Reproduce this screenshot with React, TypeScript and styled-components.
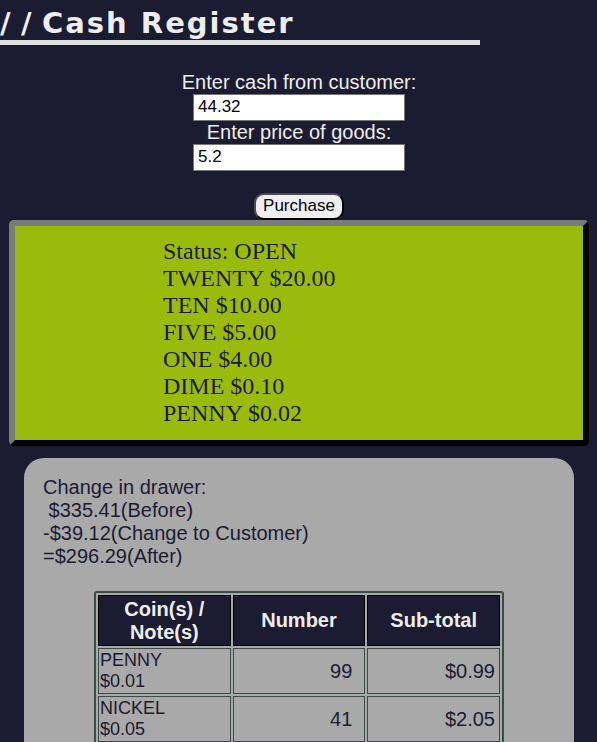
import React, { useState } from "react";
import styled, { createGlobalStyle } from "styled-components";

const Global = createGlobalStyle`
  *, *::before, *::after { box-sizing: border-box; }
  html, body { margin: 0; padding: 0; }
  html { min-height: 100%; scrollbar-width: none; }
  body { background: #1b1b32; font-family: "Liberation Sans", Arial, sans-serif; }
`;

const Page = styled.main`
  display: flex;
  flex-direction: column;
  color: #eeeeee;
`;

const Title = styled.h1`
  margin: 0;
  width: 100%;
  max-width: 480px;
  padding-top: 6px;
  border-bottom: 5px solid #dfdfe2;
  font: bold 29px/34px "DejaVu Sans", Verdana, sans-serif;
  letter-spacing: 2px;
  white-space: nowrap;
`;

const Slash = styled.span`
  display: inline-block;
  width: 21px;
`;

const Form = styled.form`
  display: flex;
  flex-direction: column;
  align-items: center;
  padding: 26px 0 0 1px;
`;

const Label = styled.label`
  font-size: 20px;
  line-height: 23px;
`;

const Field = styled.input`
  width: 212px;
  height: 27px;
  padding: 0 4px 2px;
  border: 1px solid #767676;
  border-radius: 0;
  background: #fff;
  color: #000;
  font: 17px "Liberation Sans", Arial, sans-serif;
`;

const Purchase = styled.button`
  margin-top: 22px;
  padding: 0 7px 2px;
  height: 27px;
  border: 2px solid;
  border-color: #4c4c4c #000 #000 #4c4c4c;
  border-radius: 10px;
  background: #efefef;
  color: #000;
  font: 17px "Liberation Sans", Arial, sans-serif;
`;

const Status = styled.section`
  margin: 0 8px 0 9px;
  padding: 12px 0 13px 148px;
  border: 6px solid;
  border-color: #787c7c #000 #000 #787c7c;
  border-radius: 5px;
  background: #9bbb0c;
  color: #1b1b32;
  font: 24px/27px "Liberation Serif", "Times New Roman", serif;
`;

const Drawer = styled.section`
  margin: 12px 23px 0 24px;
  padding: 18px 19px 0;
  border-radius: 20px 20px 0 0;
  background: #a9a9a9;
  color: #1b1b32;
  font-size: 20px;
  line-height: 23px;
`;

const Line = styled.div`
  white-space: pre;
`;

const Table = styled.table`
  width: 410px;
  max-width: 100%;
  margin: 23px auto 0;
  border: 2px solid #3c4b48;
  border-radius: 3px;
  border-spacing: 2px;
  table-layout: fixed;
`;

const Head = styled.th`
  padding: 1px;
  height: 51px;
  border: 1px solid #000;
  background: #1b1b32;
  color: #eeeeee;
`;

const Coin = styled.td`
  padding: 0 1px;
  height: 46px;
  border: 1px solid #3c4b48;
  font-size: 18px;
  line-height: 21px;
`;

const Amount = styled.td<{ $inset: number }>`
  padding: 0 ${(p) => p.$inset}px 0 1px;
  border: 1px solid #3c4b48;
  text-align: right;
`;

const change = ["Status: OPEN", "TWENTY $20.00", "TEN $10.00", "FIVE $5.00", "ONE $4.00", "DIME $0.10", "PENNY $0.02"];
const totals = ["Change in drawer:", " $335.41(Before)", "-$39.12(Change to Customer)", "=$296.29(After)"];
const coins = [
  { name: "PENNY", value: "$0.01", count: 99, total: "$0.99" },
  { name: "NICKEL", value: "$0.05", count: 41, total: "$2.05" },
];

export default function App() {
  const [cash, setCash] = useState("44.32");
  const [price, setPrice] = useState("5.2");
  return (
    <Page>
      <Global />
      <Title><Slash>/</Slash><Slash>/</Slash>Cash Register</Title>
      <Form onSubmit={(e) => e.preventDefault()}>
        <Label htmlFor="cash">Enter cash from customer:</Label>
        <Field id="cash" value={cash} onChange={(e) => setCash(e.target.value)} />
        <Label htmlFor="price">Enter price of goods:</Label>
        <Field id="price" value={price} onChange={(e) => setPrice(e.target.value)} />
        <Purchase type="submit">Purchase</Purchase>
      </Form>
      <Status>{change.map((c) => <Line key={c}>{c}</Line>)}</Status>
      <Drawer>
        {totals.map((t) => <Line key={t}>{t}</Line>)}
        <Table>
          <thead>
            <tr><Head>Coin(s) / Note(s)</Head><Head>Number</Head><Head>Sub-total</Head></tr>
          </thead>
          <tbody>
            {coins.map((c) => (
              <tr key={c.name}>
                <Coin>{c.name}<br />{c.value}</Coin>
                <Amount $inset={12}>{c.count}</Amount>
                <Amount $inset={4}>{c.total}</Amount>
              </tr>
            ))}
          </tbody>
        </Table>
      </Drawer>
    </Page>
  );
}
